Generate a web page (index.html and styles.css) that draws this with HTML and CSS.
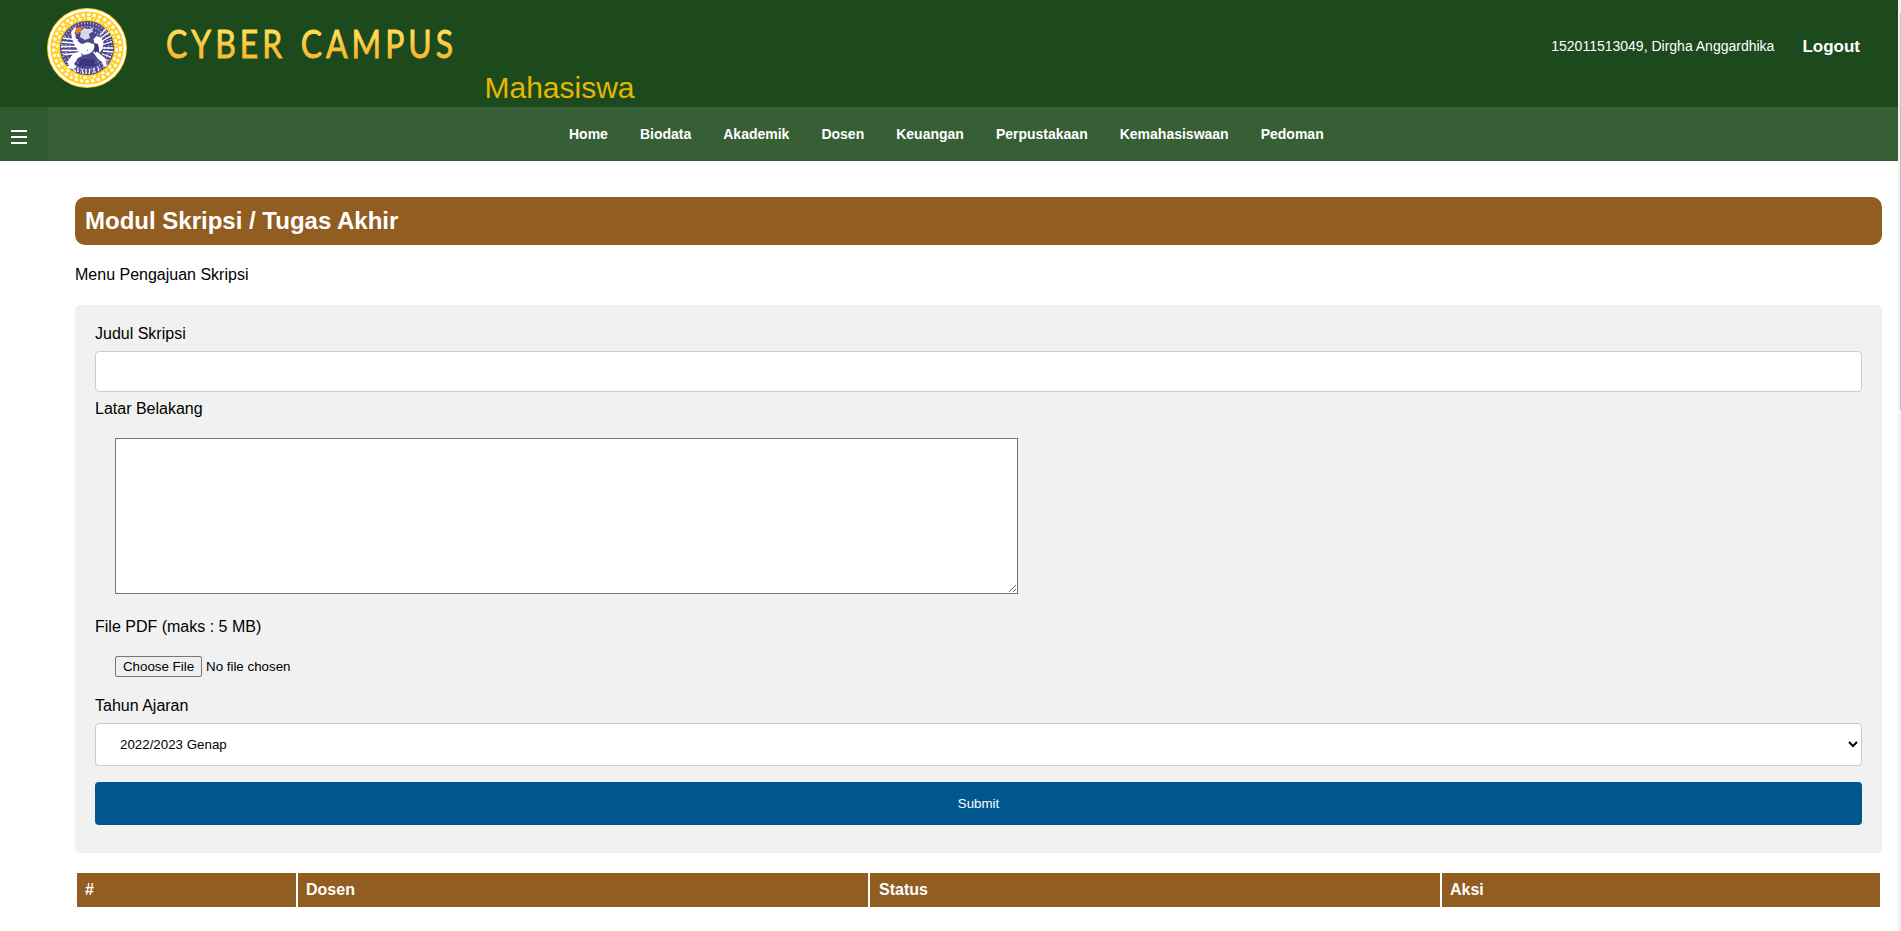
FILE: index.html
```html
<!DOCTYPE html>
<html lang="id">
<head>
<meta charset="utf-8">
<title>Cyber Campus</title>
<link rel="stylesheet" href="styles.css">
</head>
<body>
<div class="page">
<header class="header">
  <svg class="logo" viewBox="0 0 80 80">
    <circle cx="40" cy="40" r="40" fill="#ffcf20"/>
    <circle cx="40" cy="40" r="37.8" fill="none" stroke="#fff" stroke-width="2.4"/>
    <circle cx="40" cy="40" r="33.3" fill="none" stroke="#fff" stroke-width="3" stroke-dasharray="3.2 2.4"/>
    <circle cx="40" cy="40" r="29.6" fill="none" stroke="#fff" stroke-width="2.2" stroke-dasharray="3.6 2.4 1 2.3"/>
    <circle cx="40" cy="40" r="27" fill="#4d478e"/>
    <g fill="none" stroke="#b9b5d8">
      <circle cx="40" cy="40" r="25" stroke-width="2" stroke-dasharray="1 2"/>
      <circle cx="40" cy="40" r="21.5" stroke-width="1.6" stroke-dasharray="1.2 1.6"/>
      <circle cx="40" cy="40" r="17.5" stroke-width="1.6" stroke-dasharray="1 2"/>
    </g>
    <g fill="none" stroke="#fff" stroke-width="1.3">
      <path d="M16 30l15 2M14.500 34l17 1.500M14 38.500h18M15 42.500h17M16 46.500l14-1M53 27l6-6M54 30l8-6M55 33l9-5M56 36.500l9-3M56 40h10M56 43l10 1M55 46l9 3M54 49l7 4"/>
    </g>
    <path d="M25 31l-1-7 4-5 1.500 1-2 5 2 7 5 4 6-1 7 1-1-5 3-3 5 2 2 5-1 6-3 4-1-6-3-1-3 5-4 3-5 1-4-3-4-5z" fill="#fff"/>
    <path d="M34 23l3-3 4 1 5-1-1 4-3 2 1 4-5 2-5-3z" fill="#d9d7ea"/>
    <path d="M33 43l-7 3-6 8 2 3-3 3 7 1 4-2-3-3 4-6 4-2zM46 44l5 7 4 3 2 5 3-1-2-8-5-4-4-3z" fill="#fff"/>
    <path d="M47 35l4 1 1 6-4 3z" fill="#3b3480"/>
    <circle cx="40.500" cy="40" r="5.800" fill="#fff"/>
    <circle cx="40.500" cy="42" r=".6" fill="#4d478e"/>
    <path d="M29 20l6-1-1 4-4 3-2-2z" fill="#f47a20"/>
    <path d="M34 51h12l4 7H30z" fill="#3b3480"/>
    <path d="M26 61l3 3M31 60v4M35 61l1 5M39 61v5M43 61l-1 5M47 60v5M51 59l1 4" stroke="#fff" stroke-width="1.200"/>
  </svg>
  <svg class="brand" width="318" height="50" viewBox="0 0 318 50">
    <defs><linearGradient id="gold" gradientUnits="userSpaceOnUse" x1="0" y1="9" x2="0" y2="38"><stop offset="0.200" stop-color="#ffda55"/><stop offset="0.800" stop-color="#f9bb33"/></linearGradient></defs>
    <text class="brand-text" x="0" y="37.500" textLength="291" lengthAdjust="spacingAndGlyphs" fill="url(#gold)" stroke="url(#gold)" stroke-width="0.900">CYBER CAMPUS</text>
  </svg>
  <div class="role">Mahasiswa</div>
  <div class="user">152011513049, Dirgha Anggardhika</div>
  <a class="logout">Logout</a>
</header>
<nav class="nav">
  <div class="burger"><svg width="16" height="14" viewBox="0 0 16 14"><path d="M0 1h16M0 7h16M0 13h16" stroke="#fff" stroke-width="2"/></svg></div>
  <a>Home</a><a>Biodata</a><a>Akademik</a><a>Dosen</a><a>Keuangan</a><a>Perpustakaan</a><a>Kemahasiswaan</a><a>Pedoman</a>
</nav>
<main class="main">
  <h1 class="title">Modul Skripsi / Tugas Akhir</h1>
  <p class="intro">Menu Pengajuan Skripsi</p>
  <form class="form">
    <label class="label">Judul Skripsi</label>
    <input class="text" type="text">
    <label class="label label-area">Latar Belakang</label>
    <textarea class="area"></textarea>
    <label class="label label-file">File PDF (maks : 5 MB)</label>
    <div class="file"><button type="button" class="choose">Choose File</button><span>No file chosen</span></div>
    <label class="label label-year">Tahun Ajaran</label>
    <select class="select"><option>2022/2023 Genap</option></select>
    <button type="button" class="submit">Submit</button>
  </form>
  <div class="table"><div>#</div><div>Dosen</div><div class="status">Status</div><div>Aksi</div></div>
</main>
</div>
<div class="scroll"><div class="thumb"></div></div>
</body>
</html>
```
FILE: styles.css
```css
* { box-sizing: border-box; }
body { margin: 0; display: flex; height: 931px; overflow: hidden; background: #fff; font-family: "Liberation Sans", Arial, sans-serif; color: #000; }
.page { width: 1898px; }
.scroll { width: 3px; background: #f1f1f1; padding: 13px 0 0 2px; }
.thumb { height: 397px; background: #c1c1c1; }
.header { height: 107px; background: #1c4a1c; display: flex; align-items: flex-start; color: #fff; white-space: nowrap; }
.logo { width: 80px; height: 80px; margin: 8px 0 0 47px; }
.brand { margin: 20px 0 0 39px; overflow: visible; }
.brand-text { font-family: "Trebuchet MS", Lato, sans-serif; font-size: 39.5px; letter-spacing: 5px; word-spacing: 3px; }
.role { font-size: 30px; line-height: 34px; margin: 71px 0 0 0.5px; color: #e5b700; }
.user { font-size: 14px; line-height: 16px; margin: 38px 28px 0 auto; }
.logout { font-size: 17px; line-height: 20px; font-weight: bold; margin: 37px 38px 0 0; }
.nav { height: 54px; background: #365f36; display: flex; align-items: flex-start; color: #fff; font-size: 14px; font-weight: bold; }
.nav a { margin: 19px 32px 0 0; line-height: 16px; }
.burger { width: 48px; height: 54px; margin-right: 521px; padding: 23px 0 0 11px; background: #305b30; }
.burger svg { display: block; }
.main { padding: 36px 16px 0 75px; }
.title { height: 48px; margin: 0; padding: 0 10px; background: #925d20; border-radius: 10px; color: #fff; font-size: 24px; line-height: 47px; }
.intro { margin: 20px 0 21px; font-size: 16px; line-height: 19px; }
.form { height: 548px; padding: 20px; background: #f1f1f1; border-radius: 5px; }
.label { display: block; font-size: 16px; line-height: 18px; }
.text { display: block; width: 100%; height: 41px; margin-top: 8px; border: 1px solid #ccc; border-radius: 4px; }
.label-area { margin-top: 8px; }
.area { display: block; width: 903px; height: 156px; margin: 20px 0 0 20px; border: 1px solid #767676; background: #fff; }
.label-file { margin-top: 24px; }
.file { display: flex; align-items: center; margin: 20px 0 0 20px; gap: 4px; font-size: 13.333px; }
.choose { width: 87px; height: 21px; padding: 0; border: 1px solid #767676; border-radius: 2px; background: #efefef; font: 13.333px "Liberation Sans", Arial, sans-serif; }
.label-year { margin-top: 20px; }
.select { display: block; width: 100%; height: 43px; margin-top: 8px; padding: 0 1px 0 20px; border: 1px solid #ccc; border-radius: 4px; background: #fff; font: 13.333px "Liberation Sans", Arial, sans-serif; }
.submit { display: block; width: 100%; height: 43px; margin-top: 16px; border: 0; border-radius: 4px; background: #00568f; color: #fff; font: 13.333px "Liberation Sans", Arial, sans-serif; }
.table { display: grid; grid-template-columns: 219px 570px 570px 1fr; gap: 2px; margin: 20px 2px 0; color: #fff; font-size: 16px; font-weight: bold; line-height: 33px; }
.table div { height: 34px; padding-left: 8px; background: #925d20; }
.table .status { padding-left: 9px; }
```
